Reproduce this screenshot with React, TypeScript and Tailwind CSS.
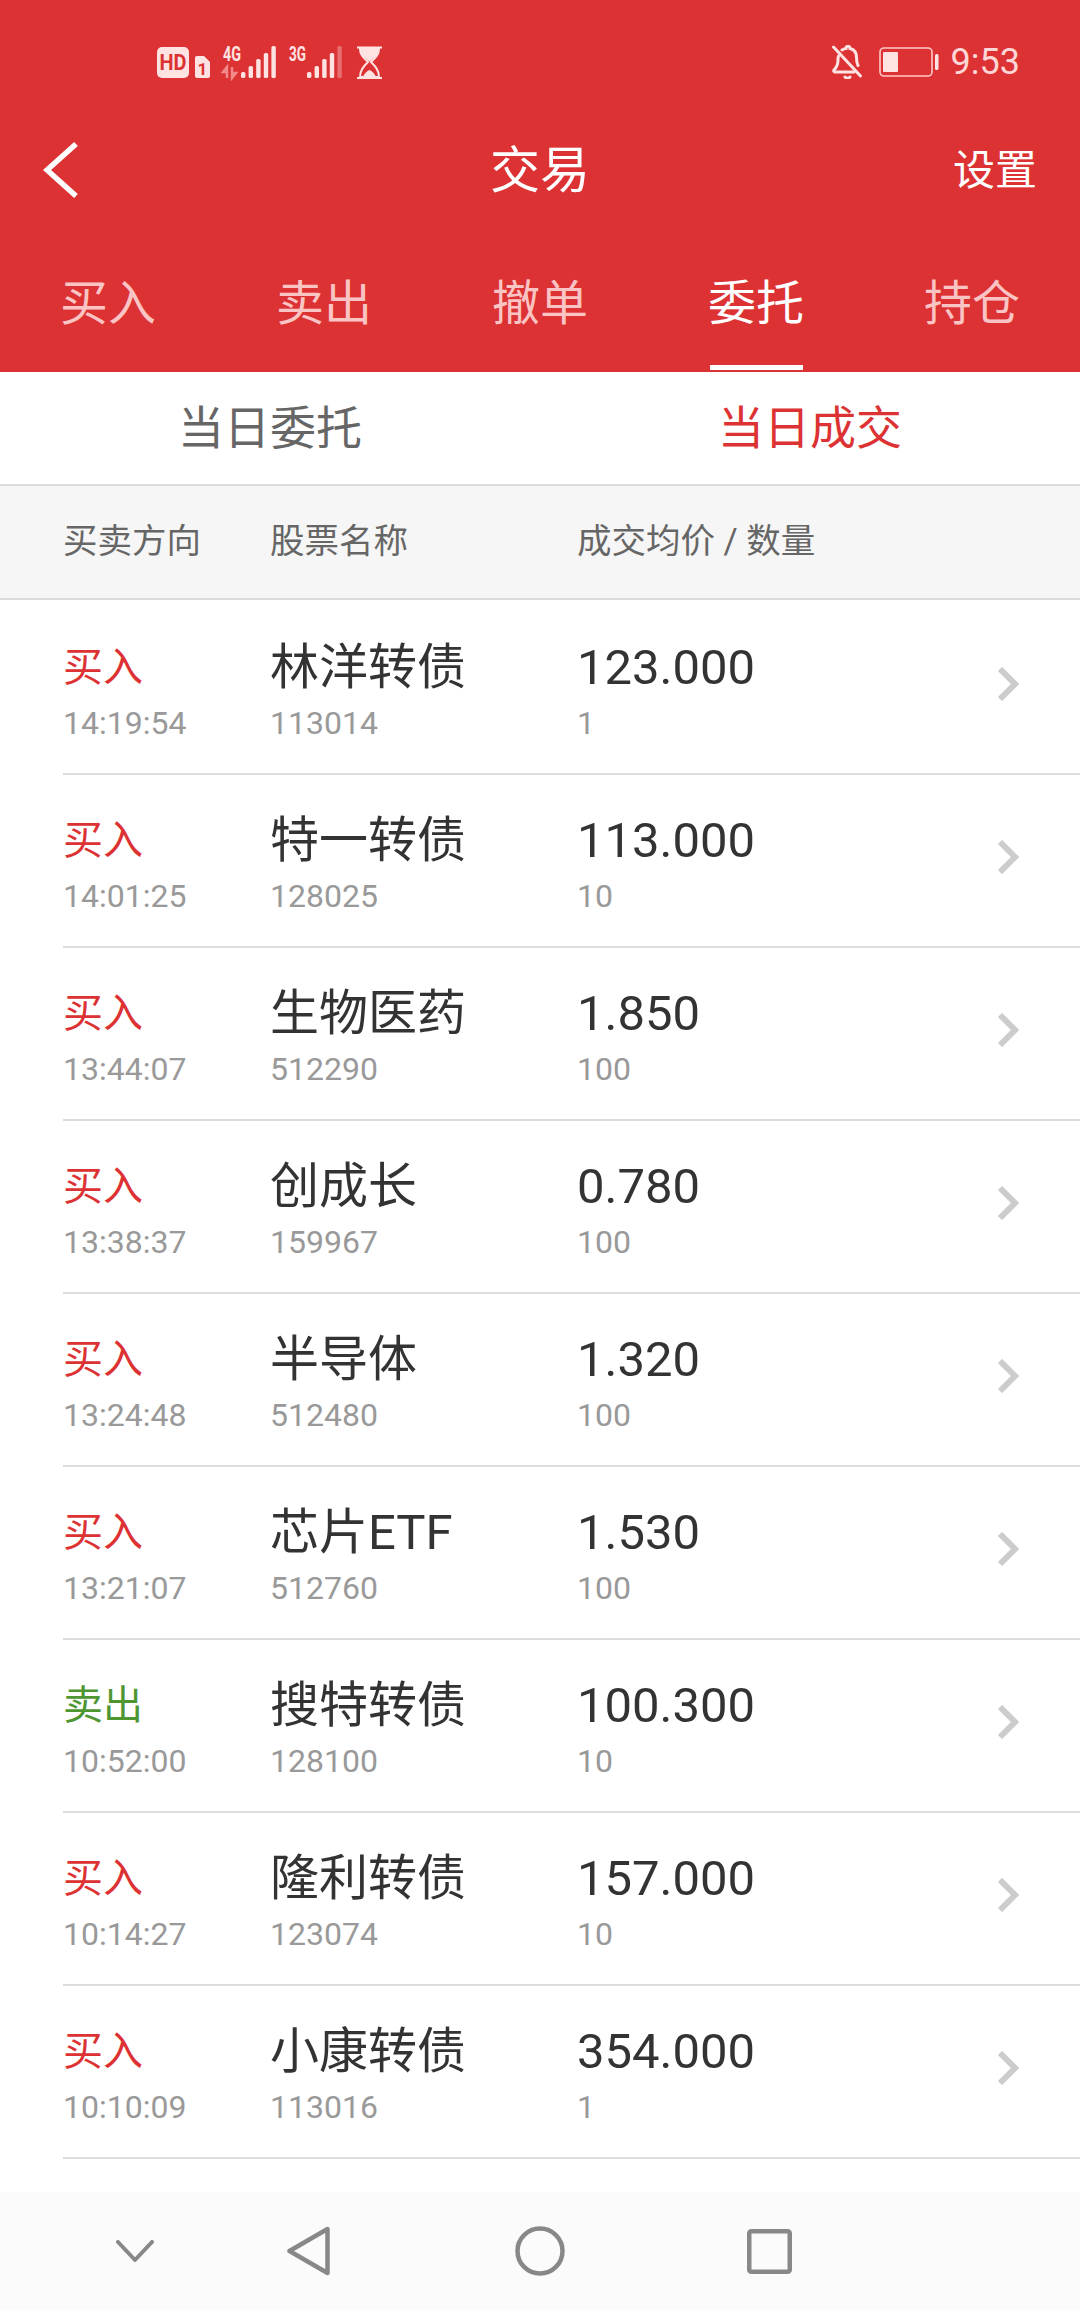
import { ReactNode } from 'react'

const trades = [
  { side: '买入', time: '14:19:54', name: '林洋转债', code: '113014', price: '123.000', qty: '1' },
  { side: '买入', time: '14:01:25', name: '特一转债', code: '128025', price: '113.000', qty: '10' },
  { side: '买入', time: '13:44:07', name: '生物医药', code: '512290', price: '1.850', qty: '100' },
  { side: '买入', time: '13:38:37', name: '创成长', code: '159967', price: '0.780', qty: '100' },
  { side: '买入', time: '13:24:48', name: '半导体', code: '512480', price: '1.320', qty: '100' },
  { side: '买入', time: '13:21:07', name: '芯片ETF', code: '512760', price: '1.530', qty: '100' },
  { side: '卖出', time: '10:52:00', name: '搜特转债', code: '128100', price: '100.300', qty: '10' },
  { side: '买入', time: '10:14:27', name: '隆利转债', code: '123074', price: '157.000', qty: '10' },
  { side: '买入', time: '10:10:09', name: '小康转债', code: '113016', price: '354.000', qty: '1' },
]

const tabs = ['买入', '卖出', '撤单', '委托', '持仓']

function Bars({ x, fadedLast }: { x: number; fadedLast?: boolean }): ReactNode {
  const heights = [6, 12, 19, 25, 32]
  return (
    <>
      {heights.map((h, i) => (
        <rect
          key={i}
          x={x + i * 7.6}
          y={33 - h}
          width={4.4}
          height={h}
          rx={1.6}
          fill="#ffe3e3"
          opacity={fadedLast && i === 4 ? 0.35 : 1}
        />
      ))}
    </>
  )
}

function StatusLeft() {
  return (
    <svg width="226" height="64" viewBox="0 -15 226 64">
      <rect x="0" y="2" width="32" height="31" rx="5" fill="#ffe3e3" />
      <text x="16" y="25" textAnchor="middle" fontSize="22" fontWeight="700" fill="#dc3233" fontFamily="Roboto, sans-serif" textLength="27" lengthAdjust="spacingAndGlyphs">HD</text>
      <path d="M38 13a2 2 0 0 1 2-2h7l6 6v14a2 2 0 0 1-2 2H40a2 2 0 0 1-2-2z" fill="#ffe3e3" />
      <text x="45.500" y="30" textAnchor="middle" fontSize="17" fontWeight="700" fill="#dc3233" fontFamily="Roboto, sans-serif">1</text>
      <text x="66" y="16" fontSize="21" fontWeight="700" fill="#ffe3e3" fontFamily="Roboto, sans-serif" textLength="18" lengthAdjust="spacingAndGlyphs">4G</text>
      <path d="M70 33v-11l-4 5h4M75 22v11l4-5h-4" fill="none" stroke="#f28a8a" strokeWidth="2.400" />
      <Bars x={84} />
      <text x="132" y="16" fontSize="21" fontWeight="700" fill="#ffe3e3" fontFamily="Roboto, sans-serif" textLength="17" lengthAdjust="spacingAndGlyphs">3G</text>
      <Bars x={150} fadedLast />
      <path d="M200 2.500h25M200 33h25" stroke="#ffe3e3" strokeWidth="2" />
      <path d="M203 4h19c0 6-4 9-8 13 4 4 8 8 8 15h-19c0-7 4-11 8-15-4-4-8-7-8-13z" fill="none" stroke="#ffe3e3" strokeWidth="2" />
      <path d="M203 4h19c0 5-4 8-9.500 12.500C207 12 203 9 203 4zM206 32c1-3 4-6 6.500-7 2.500 1 5.500 4 6.500 7z" fill="#ffe3e3" />
    </svg>
  )
}

function StatusRight() {
  return (
    <div className="flex items-center">
      <svg width="30" height="34" viewBox="0 0 30 34" fill="none" stroke="#ffe3e3" strokeWidth="3" strokeLinecap="round">
        <path d="M1.500 2l27 29" />
        <path d="M6.500 11c-.5 1-.5 2-.5 4 0 5-2 8-4 10-.7.8 0 2 1 2h19" />
        <path d="M10 5c1.500-1 3-1.500 4-1.500 0-3 4-3 4 0 4 1 6.500 4.500 6.500 9 0 3 .5 6 1.500 8" />
        <path d="M13 32c1 1.500 4 1.500 5 0" />
      </svg>
      <svg className="ml-[17px]" width="60" height="30" viewBox="0 0 60 30" fill="none">
        <rect x="1" y="1" width="52" height="28" rx="4" stroke="#ffc9c9" strokeWidth="1.600" />
        <rect x="4" y="5" width="15" height="20" rx="1" fill="#ffe3e3" />
        <rect x="56" y="7" width="3.500" height="16" rx="1.500" fill="#ffe3e3" />
      </svg>
      <span className="ml-[12px] text-[36px] leading-none text-[#ffd6d6]">9:53</span>
    </div>
  )
}

function TradeRow({ t }: { t: (typeof trades)[number] }) {
  return (
    <div className="ml-[63px] flex h-[173px] shrink-0 border-b-2 border-[#dcdcdc] pt-[38px]">
      <div className="w-[207px]">
        <div className={`text-[40px] leading-[56px] ${t.side === '卖出' ? 'text-[#4e9632]' : 'text-[#dc3233]'}`}>{t.side}</div>
        <div className="text-[32px] leading-[55px] text-[#999999]">{t.time}</div>
      </div>
      <div className="w-[307px]">
        <div className="text-[49px] leading-[56px] text-[#333333]">{t.name}</div>
        <div className="text-[32px] leading-[55px] text-[#999999]">{t.code}</div>
      </div>
      <div className="flex-1">
        <div className="text-[49px] leading-[56px] text-[#333333]">{t.price}</div>
        <div className="text-[32px] leading-[55px] text-[#999999]">{t.qty}</div>
      </div>
      <svg className="mr-[61px] mt-[27px]" width="22" height="34" viewBox="0 0 22 34" fill="none" stroke="#cccccc" strokeWidth="6">
        <path d="M3 2l15 15L3 32" />
      </svg>
    </div>
  )
}

export default function App() {
  return (
    <div className="flex h-[2310px] w-[1080px] flex-col overflow-hidden bg-white font-['Roboto','Noto_Sans_CJK_SC',sans-serif]">
      <div className="shrink-0 bg-[#dc3233]">
        <div className="flex h-[124px] items-center justify-between pl-[157px] pr-[60px]">
          <StatusLeft />
          <StatusRight />
        </div>
        <div className="relative flex h-[92px] items-center justify-between pl-[43px] pr-[43px]">
          <svg width="36" height="58" viewBox="0 0 36 58" fill="none" stroke="#ffffff" strokeWidth="5.500">
            <path d="M33 3L4 29l29 26" />
          </svg>
          <span className="absolute inset-x-0 top-[17px] text-center text-[50px] leading-[60px] text-white">交易</span>
          <span className="pt-[2px] text-[42px] leading-[60px] text-white">设置</span>
        </div>
        <div className="flex h-[156px] pt-[58px]">
          {tabs.map(tab => (
            <div key={tab} className="flex flex-1 flex-col items-center">
              <span className={`text-[48px] leading-[60px] ${tab === '委托' ? 'text-white' : 'text-[#fbc4c4]'}`}>{tab}</span>
              {tab === '委托' && <div className="mt-[31px] h-[5px] w-[93px] bg-white" />}
            </div>
          ))}
        </div>
      </div>

      <div className="flex h-[114px] shrink-0 border-b-2 border-[#dcdcdc]">
        <div className="flex flex-1 items-center justify-center text-[46px] text-[#666666]">当日委托</div>
        <div className="flex flex-1 items-center justify-center text-[46px] text-[#dc3233]">当日成交</div>
      </div>

      <div className="flex h-[114px] shrink-0 items-center border-b-2 border-[#dcdcdc] bg-[#f6f6f6] pl-[63px] text-[34.500px] text-[#666666]">
        <div className="w-[207px]">买卖方向</div>
        <div className="w-[307px]">股票名称</div>
        <div>成交均价 / 数量</div>
      </div>

      <div className="flex min-h-0 flex-1 flex-col overflow-hidden pt-[2px]">
        {trades.map(t => (
          <TradeRow key={t.time} t={t} />
        ))}
      </div>

      <div className="flex h-[118px] shrink-0 items-center bg-[#fbfbfb] pl-[116px]">
        <svg width="38" height="22" viewBox="0 0 38 22" fill="none" stroke="#888888" strokeWidth="4" strokeLinecap="round" strokeLinejoin="round">
          <path d="M2 2l17 18L36 2" />
        </svg>
        <svg className="ml-[133px]" width="43" height="50" viewBox="0 0 43 50" fill="none" stroke="#888888" strokeWidth="4.500" strokeLinejoin="round">
          <path d="M40.500 3v44L2.500 25z" />
        </svg>
        <svg className="ml-[185px]" width="50" height="50" viewBox="0 0 50 50" fill="none" stroke="#888888" strokeWidth="4.500">
          <circle cx="25" cy="25" r="22.500" />
        </svg>
        <svg className="ml-[182px]" width="45" height="45" viewBox="0 0 45 45" fill="none" stroke="#888888" strokeWidth="4.500" strokeLinejoin="round">
          <rect x="2.250" y="2.250" width="40.500" height="40.500" rx="2" />
        </svg>
      </div>
    </div>
  )
}
